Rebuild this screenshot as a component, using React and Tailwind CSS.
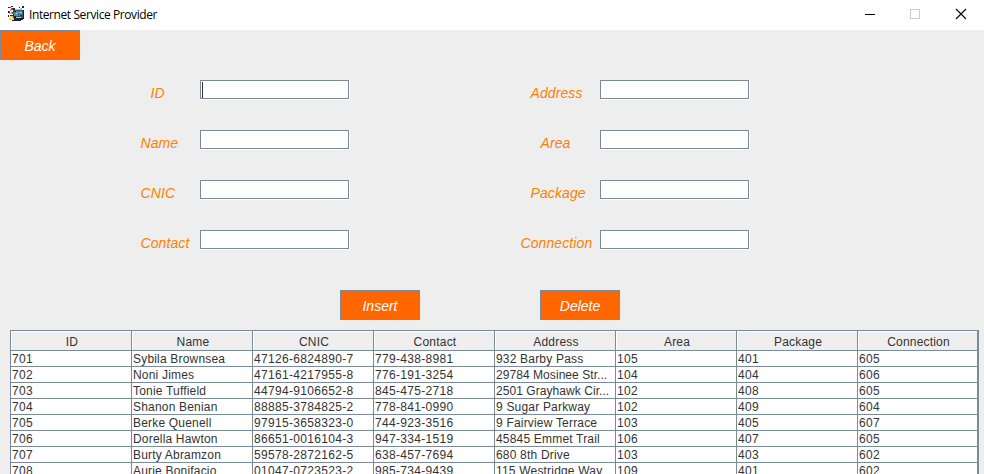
const COLUMNS = ["ID", "Name", "CNIC", "Contact", "Address", "Area", "Package", "Connection"];

const ROWS = [
  ["701", "Sybila Brownsea", "47126-6824890-7", "779-438-8981", "932 Barby Pass", "105", "401", "605"],
  ["702", "Noni Jimes", "47161-4217955-8", "776-191-3254", "29784 Mosinee Str...", "104", "404", "606"],
  ["703", "Tonie Tuffield", "44794-9106652-8", "845-475-2718", "2501 Grayhawk Cir...", "102", "408", "605"],
  ["704", "Shanon Benian", "88885-3784825-2", "778-841-0990", "9 Sugar Parkway", "102", "409", "604"],
  ["705", "Berke Quenell", "97915-3658323-0", "744-923-3516", "9 Fairview Terrace", "103", "405", "607"],
  ["706", "Dorella Hawton", "86651-0016104-3", "947-334-1519", "45845 Emmet Trail", "106", "407", "605"],
  ["707", "Burty Abramzon", "59578-2872162-5", "638-457-7694", "680 8th Drive", "103", "403", "602"],
  ["708", "Aurie Bonifacio", "01047-0723523-2", "985-734-9439", "115 Westridge Way", "109", "401", "602"],
];

const LEFT_FIELDS = [
  ["ID", "pl-[10.5px]"],
  ["Name", "pl-[0.5px]"],
  ["CNIC", "pl-[0.5px]"],
  ["Contact", "pl-[0.5px]"],
];
const RIGHT_FIELDS = [
  ["Address", "pl-[10.5px]"],
  ["Area", "pl-[20.5px]"],
  ["Package", "pl-[10.5px]"],
  ["Connection", "pl-[0.5px]"],
];

function cellTracking(cell) {
  if (cell.endsWith("...")) return "tracking-[0.06px]";
  return /[a-z]/.test(cell) ? "tracking-[0.19px]" : "tracking-[0.32px]";
}

function AppIcon() {
  return (
    <svg width="16" height="16" viewBox="0 0 16 16" shapeRendering="crispEdges">
      <path fill="#35586a" d="M5 4h10v8H5z" />
      <path fill="#4a8fac" d="M6 5h8v5H6z" />
      <path fill="#1b252c" d="M0 1h1v1H0zM3 0h2v1H3zM5 2h2v2H5zM11 1h1v1h-1zM14 0h2v2h-2zM0 5h2v2H0zM2 9h4v1H2zM0 9h1v2H0zM6 12h9v2H6zM15 4h1v9h-1zM7 14h6v1H7zM4 14h3v1H4z" />
      <path fill="#9d4631" d="M1 1h2v1H1zM3 2h2v2H3zM1 5h1v1H1zM4 6h1v2H4z" />
      <path fill="#e0a183" d="M2 3h1v2H2zM3 5h1v3H3zM1 7h2v1H1z" />
      <path fill="#a9cbd6" d="M7 3h6v1H7zM12 2h2v2h-2zM8 7h2v1H8zM12 6h2v1h-2zM8 11h5v1H8z" />
      <path fill="#152029" d="M6 5h2v1H6zM10 8h1v1h-1zM12 9h2v1h-2zM6 10h2v2H6z" />
      <path fill="#f4cf68" d="M2 10h3v2H2zM1 12h5v2H1z" />
      <path fill="#fff0ad" d="M3 11h1v2H3z" />
    </svg>
  );
}

function TitleBar() {
  return (
    <header className="flex h-[30px] items-center bg-white pl-2">
      <div className="-mt-0.5">
        <AppIcon />
      </div>
      <h1 className="ml-[5px] font-['Open_Sans',sans-serif] text-[12px] leading-[30px] tracking-[-0.41px] text-black">
        Internet Service Provider
      </h1>
      <div className="ml-auto flex h-full">
        <svg width="138" height="30" viewBox="0 0 138 30" fill="none" shapeRendering="crispEdges">
          <path d="M19 14.5h10" stroke="#000" />
          <path d="M64.500 9.500h9v9h-9z" stroke="#ccc" />
          <path d="M110 9l10 10M120 9l-10 10" stroke="#000" strokeWidth="1.1" shapeRendering="auto" />
        </svg>
      </div>
    </header>
  );
}

function Button({ children }) {
  return (
    <button className="h-[30px] w-20 border border-[#7a8a99] bg-[#ff6600] pt-px text-center text-[14px] leading-[29px] text-white italic">
      {children}
    </button>
  );
}

function TextField({ caret }) {
  return (
    <div className="h-5 w-[150px] border-r border-b border-white">
      <div className="h-[19px] w-[149px] border border-[#7a8a99] bg-white pt-px pl-px">
        {caret && <div className="h-4 w-px bg-[#333]" />}
      </div>
    </div>
  );
}

function FieldColumn({ fields, labelWidth, focused }) {
  return (
    <div className="flex flex-col gap-[30px]">
      {fields.map(([label, indent]) => (
        <div key={label} className="flex h-5">
          <div className={labelWidth}>
            <div className={`${indent} pt-[3px] text-[14px] leading-5 tracking-[0.1px] text-[#ff8000] italic`}>{label}</div>
          </div>
          <TextField caret={label === focused} />
        </div>
      ))}
    </div>
  );
}

function DataTable() {
  return (
    <div className="ml-[10px] w-[969px] border-t border-r border-l border-[#7a8a99] text-[12px] text-[#333]">
      <div className="grid h-5 grid-cols-[repeat(8,121px)] overflow-hidden border-b border-[#7a8a99] bg-[#eee]">
        {COLUMNS.map((name) => (
          <div key={name} className="border-r border-[#7a8a99] last:w-[120px]">
            <div className="h-[19px] border-t border-l border-white pl-px text-center leading-5 tracking-[0.2px]">{name}</div>
          </div>
        ))}
      </div>
      {ROWS.map((row) => (
        <div key={row[0]} className="grid h-4 grid-cols-[repeat(8,121px)] border-b border-[#7a8a99] bg-white">
          {row.map((cell, i) => (
            <div
              key={i}
              className={`h-[15px] border-r border-[#7a8a99] pl-px leading-[17px] whitespace-nowrap last:w-[120px] ${cellTracking(cell)}`}
            >
              {cell}
            </div>
          ))}
        </div>
      ))}
    </div>
  );
}

export default function App() {
  return (
    <div className="h-[474px] w-[984px] overflow-hidden bg-[#eee] font-['Liberation_Sans',Arial,sans-serif]">
      <TitleBar />
      <div className="flex">
        <Button>Back</Button>
      </div>
      <div className="mt-5 flex gap-[170px] pl-[140px]">
        <FieldColumn fields={LEFT_FIELDS} labelWidth="w-[60px]" focused="ID" />
        <FieldColumn fields={RIGHT_FIELDS} labelWidth="w-20" />
      </div>
      <div className="mt-10 mb-[10px] flex gap-[120px] pl-[340px]">
        <Button>Insert</Button>
        <Button>Delete</Button>
      </div>
      <DataTable />
    </div>
  );
}
